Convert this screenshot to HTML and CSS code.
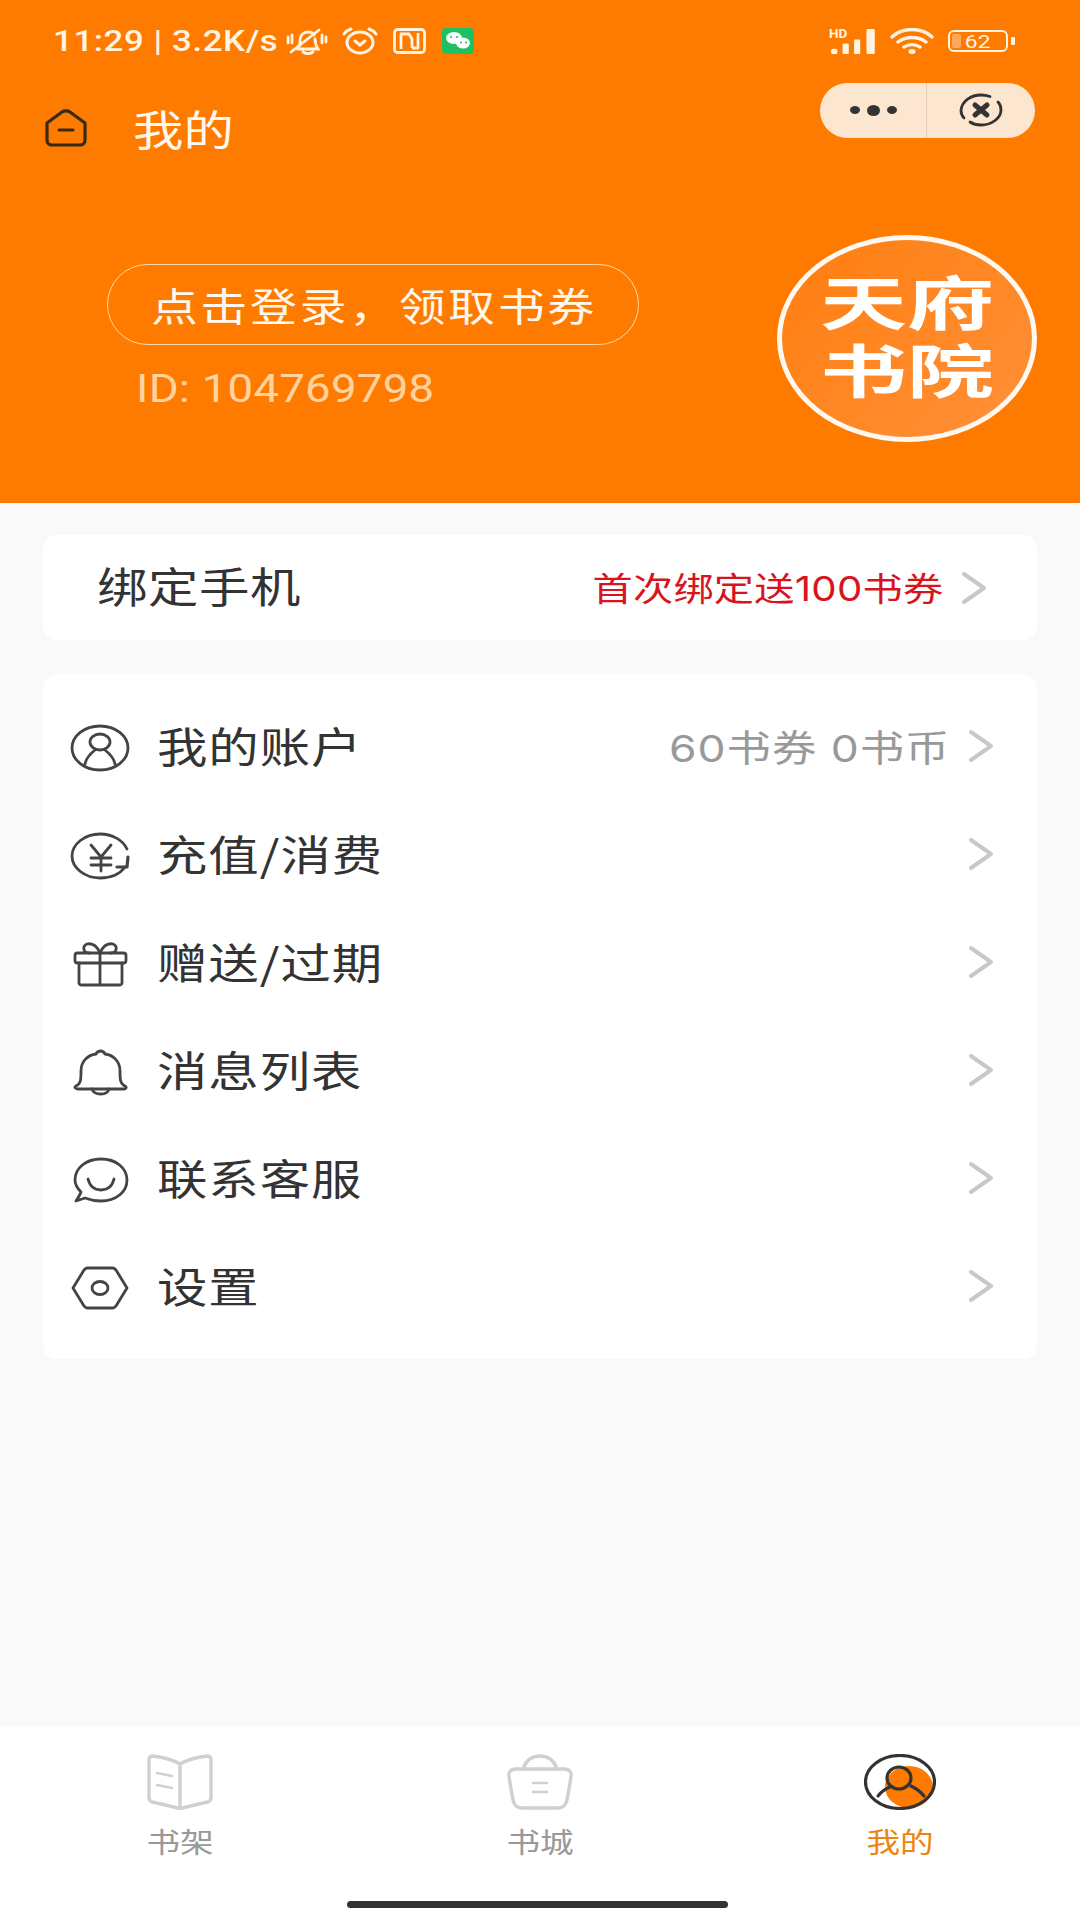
FILE: index.html
```html
<!DOCTYPE html>
<html lang="zh-CN">
<head>
<meta charset="utf-8">
<title>我的</title>
<link rel="stylesheet" href="styles.css">
</head>
<body>
<div class="page">
  <header class="header">
    <div class="status">
      <div class="status-left">
        <span class="time"><span class="sx">11:29 | 3.2K/s</span></span>
        <svg class="st-mute" viewBox="0 0 42 28" fill="none" stroke="#FFF3E2" stroke-width="2.800" stroke-linecap="round"><path d="M11 22c3-2 3-5 3-9 0-4 3-8 8-8 3 0 5 1 6 3M29 12c0 4 1 7 3 10H13M17 25c3 2 7 2 10 0M5 25 33 3M2 10v6M6 8v8M36 8v8M40 10v5"/></svg>
        <svg class="st-alarm" viewBox="0 0 38 28" fill="none" stroke="#FFF3E2" stroke-width="3" stroke-linecap="round"><ellipse cx="19" cy="15.500" rx="13" ry="10.500"/><path d="M3 7c2-3 4-4 7-5M35 7c-2-3-4-4-7-5M14 14l5 4 5-4"/></svg>
        <svg class="st-nfc" viewBox="0 0 33 26" fill="none" stroke="#FFF3E2" stroke-width="2.800" stroke-linejoin="round"><rect x="1.500" y="1.500" width="30" height="23" rx="3"/><path d="M8 21V6h8l3 5v9M25 5v15h-6"/></svg>
        <svg class="st-wechat" viewBox="0 0 32 26"><rect width="32" height="26" rx="4" fill="#1FC060"/><ellipse cx="12" cy="10" rx="8" ry="6" fill="#fff"/><ellipse cx="21" cy="15" rx="7" ry="5.500" fill="#fff"/><circle cx="9" cy="9" r="1.100" fill="#1FC060"/><circle cx="15" cy="9" r="1.100" fill="#1FC060"/><circle cx="19" cy="14.500" r="1" fill="#1FC060"/><circle cx="24" cy="14.500" r="1" fill="#1FC060"/></svg>
      </div>
      <div class="status-right">
        <svg class="st-signal" viewBox="0 0 46 26"><text x="-1" y="10" class="hd-text">HD</text><g fill="#FFF3E2"><rect x="1" y="20" width="6" height="5" rx="1.500"/><rect x="12" y="15" width="6" height="10" rx="1"/><rect x="23" y="11" width="6" height="14" rx="1"/><rect x="35" y="1" width="8" height="24" rx="1"/></g></svg>
        <svg class="st-wifi" viewBox="0 0 44 26" fill="none" stroke="#FFF3E2" stroke-width="3.400" stroke-linecap="round"><path d="M2 9C12-1 32-1 42 9M8 14c8-6 20-6 28 0M14 19c5-3 11-3 16 0"/><ellipse cx="22" cy="23.500" rx="3.500" ry="2.500" fill="#FFF3E2" stroke="none"/></svg>
        <div class="battery"><span class="battery-level"></span><span class="battery-num"><span class="sx-c">62</span></span></div>
        <span class="battery-nub"></span>
      </div>
    </div>
    <div class="nav">
      <svg class="nav-home" viewBox="0 0 42 38" fill="none" stroke="#3A2A14" stroke-width="3.200" stroke-linejoin="round" stroke-linecap="round"><path d="M2 14 17 3c2-1.500 6-1.500 8 0l15 11v17c0 3-2 5-5 5H7c-3 0-5-2-5-5z"/><path d="M14 21h14"/></svg>
      <span class="nav-title"><span class="sx">我的</span></span>
      <div class="capsule">
        <div class="capsule-dots"><span class="dot"></span><span class="dot dot-big"></span><span class="dot"></span></div>
        <div class="capsule-close">
          <svg class="close-icon" viewBox="0 0 44 34" fill="none" stroke="#333" stroke-linecap="round"><path d="M31 3.500C28 2.500 25 2 22 2 12 2 3 8 2 17c0 3 1 6 3 8M11 29c3 2 7 3 11 3 11 0 20-7 20-15 0-3-1-6-3-8" stroke-width="2.800"/><path d="M16 12 28 22M28 12 16 22" stroke-width="5"/></svg>
        </div>
      </div>
    </div>
    <div class="profile">
      <div class="profile-info">
        <div class="login"><span class="login-text"><span class="sx">点击登录，领取书券</span></span></div>
        <div class="uid"><span class="sx">ID: 104769798</span></div>
      </div>
      <div class="logo"><span class="logo-text">天府<br>书院</span></div>
    </div>
  </header>

  <main class="main">
    <section class="card card-bind">
      <span class="bind-title"><span class="sx">绑定手机</span></span>
      <span class="bind-note"><span class="sx-r">首次绑定送100书券</span></span>
      <svg class="chev chev-bind" viewBox="0 0 26 34" fill="none"><path d="M3 3 23 17 3 31"/></svg>
    </section>
    <section class="card card-list">
      <div class="row">
        <svg class="row-icon" viewBox="0 0 60 48"><ellipse cx="30" cy="24" rx="28" ry="22"/><ellipse cx="30" cy="18" rx="10" ry="8"/><path d="M15 40c1-6 5-10 10-14M45 40c-1-6-5-10-10-14"/></svg>
        <span class="row-label"><span class="sx">我的账户</span></span>
        <span class="row-meta"><span class="sx-r">60书券 0书币</span></span>
        <svg class="chev" viewBox="0 0 26 34" fill="none"><path d="M3 3 23 17 3 31"/></svg>
      </div>
      <div class="row">
        <svg class="row-icon" viewBox="0 0 60 48"><path d="M57 17C53 8 42 2 30 2 15 2 2 12 2 24s13 22 28 22c11 0 20-4 25-11"/><path d="M47 35h10l1-10" stroke-width="3.200"/><path d="M21 13l10 12 10-12M21 26h20M21 33h20M31 25v14"/></svg>
        <span class="row-label"><span class="sx">充值/消费</span></span>
        <svg class="chev" viewBox="0 0 26 34" fill="none"><path d="M3 3 23 17 3 31"/></svg>
      </div>
      <div class="row">
        <svg class="row-icon" viewBox="0 0 60 48"><rect x="5" y="13" width="51" height="10" rx="2.500"/><path d="M9 23v20c0 1 1 2 2 2h39c1 0 2-1 2-2V23M30 13v32M30 13c-3-7-8-10-13-9-5 2-4 9 2 9M30 13c3-7 8-10 13-9 5 2 4 9-2 9"/></svg>
        <span class="row-label"><span class="sx">赠送/过期</span></span>
        <svg class="chev" viewBox="0 0 26 34" fill="none"><path d="M3 3 23 17 3 31"/></svg>
      </div>
      <div class="row">
        <svg class="row-icon" viewBox="0 0 60 48"><path d="M6 38c5-2 5-7 5-15 0-10 7-16 15-17 2-4 7-4 9 0 8 1 15 7 15 17 0 8 0 13 5 15 2 1 1 3-1 3H8c-3 0-4-2-2-3z"/><path d="M22 41c1 4 5 5 9 5s7-1 8-5"/></svg>
        <span class="row-label"><span class="sx">消息列表</span></span>
        <svg class="chev" viewBox="0 0 26 34" fill="none"><path d="M3 3 23 17 3 31"/></svg>
      </div>
      <div class="row">
        <svg class="row-icon" viewBox="0 0 60 48"><path d="M11 36C7 32 5 28 5 24 5 12 16 3 31 3s26 9 26 21-11 21-26 21c-6 0-11-1-16-3L6 45c2-3 4-6 5-9z"/><path d="M18 23c2 8 7 11 13 11s11-3 13-11"/></svg>
        <span class="row-label"><span class="sx">联系客服</span></span>
        <svg class="chev" viewBox="0 0 26 34" fill="none"><path d="M3 3 23 17 3 31"/></svg>
      </div>
      <div class="row">
        <svg class="row-icon" viewBox="0 0 60 48"><path d="M3 24 14 6c1-1 2-2 3-2h26c1 0 2 1 3 2l11 18-11 18c-1 1-2 2-3 2H17c-1 0-2-1-3-2z"/><ellipse cx="30" cy="24" rx="8" ry="6.500"/></svg>
        <span class="row-label"><span class="sx">设置</span></span>
        <svg class="chev" viewBox="0 0 26 34" fill="none"><path d="M3 3 23 17 3 31"/></svg>
      </div>
    </section>
  </main>

  <footer class="footer">
    <nav class="tabs">
      <div class="tab">
        <svg class="tab-icon tab-gray" viewBox="0 0 66 56"><path d="M33 10C26 6 14 3 6 2 3 2 2 4 2 6v38c0 2 1 3 3 4 9 2 20 4 28 7 8-3 19-5 28-7 2-1 3-2 3-4V6c0-2-1-4-4-4-8 1-20 4-27 8zM33 10v45"/><path d="M10 19l15 3M10 31l15 3" stroke-width="2.400"/></svg>
        <span class="tab-label"><span class="sx-c">书架</span></span>
      </div>
      <div class="tab">
        <svg class="tab-icon tab-gray" viewBox="0 0 66 56"><path d="M16 15C19 6 25 2 33 2s14 4 17 13"/><path d="M9 15h48c5 0 8 3 7 8l-4 23c-1 5-4 8-9 8H15c-5 0-8-3-9-8L2 23c-1-5 2-8 7-8z"/><path d="M26 29h14M26 38h14" stroke-width="2.600"/></svg>
        <span class="tab-label"><span class="sx-c">书城</span></span>
      </div>
      <div class="tab tab-active">
        <svg class="tab-icon tab-me" viewBox="0 0 72 56"><ellipse class="me-blob" cx="45" cy="33" rx="24" ry="21"/><ellipse cx="36" cy="28" rx="34.500" ry="26.500"/><ellipse cx="35" cy="24" rx="12" ry="11"/><path d="M14 42c3-4 7-7 12-9M60 42c-3-4-7-7-13-10"/></svg>
        <span class="tab-label"><span class="sx-c">我的</span></span>
      </div>
    </nav>
    <div class="home-bar"></div>
  </footer>
</div>
</body>
</html>
```

FILE: styles.css
```css
* { box-sizing: border-box; }
html, body { margin: 0; padding: 0; }
body { font-family: "Noto Sans CJK SC", Roboto, sans-serif; }
.page { width: 1080px; height: 1920px; display: flex; flex-direction: column; background: #F9F9F9; overflow: hidden; }

.sx, .sx-r, .sx-c { display: inline-block; white-space: nowrap; transform: scaleX(1.2); }
.sx { transform-origin: left center; }
.sx-r { transform-origin: right center; }
.sx-c { transform-origin: center center; }

.header { height: 503px; background: #FF7B00; flex: none; }
.status { height: 82px; display: flex; justify-content: space-between; align-items: center; padding: 0 65px 0 53px; color: #FFF3E2; }
.status-left, .status-right { display: flex; align-items: center; }
.time { width: 233px; font-family: Roboto, sans-serif; font-weight: 500; font-size: 29px; letter-spacing: 0.5px; }
.st-mute { width: 42px; height: 28px; }
.st-alarm { width: 38px; height: 28px; margin-left: 13px; }
.st-nfc { width: 33px; height: 26px; margin-left: 14px; }
.st-wechat { width: 32px; height: 26px; margin-left: 16px; }
.st-signal { width: 48px; height: 27px; overflow: visible; }
.hd-text { font: 700 13px Roboto, sans-serif; fill: #FFF3E2; }
.st-wifi { width: 44px; height: 26px; margin-left: 12px; }
.battery { position: relative; width: 60px; height: 22px; margin-left: 14px; border: 2.500px solid #FFF3E2; border-radius: 6px; display: flex; align-items: center; justify-content: center; }
.battery-level { position: absolute; left: 2px; top: 2px; bottom: 2px; width: 9px; background: #FFA65A; border-radius: 2px; }
.battery-num { position: relative; font-family: Roboto, sans-serif; font-size: 19px; line-height: 1; color: #FFF3E2; }
.battery-nub { width: 4px; height: 8px; margin-left: 3px; background: #FFF3E2; border-radius: 1px; }

.nav { height: 56px; display: flex; align-items: center; padding: 0 45px; color: #FFF8EE; }
.nav-home { width: 42px; height: 38px; flex: none; margin-top: 36px; }
.nav-title { font-size: 42px; line-height: 56px; margin: 36px 0 0 46px; }
.capsule { margin-left: auto; width: 215px; height: 55px; display: flex; background: #FCE6D0; border-radius: 28px; }
.capsule-dots { width: 107px; display: flex; align-items: center; justify-content: center; gap: 7px; border-right: 1px solid #E3CDB8; }
.dot { width: 10px; height: 8px; background: #333; border-radius: 50%; }
.dot-big { width: 13px; height: 11px; }
.capsule-close { flex: 1; display: flex; align-items: center; justify-content: center; }
.close-icon { width: 44px; height: 34px; }

.profile { margin-top: 97px; height: 207px; display: flex; justify-content: space-between; padding: 0 43px 0 107px; }
.profile-info { padding-top: 29px; }
.login { width: 532px; height: 81px; border: 1.500px solid #FFD9A3; border-radius: 41px; display: flex; align-items: center; padding-left: 43px; color: #FFF8EE; }
.login-text { font-size: 39px; line-height: 1; letter-spacing: 2.300px; }
.uid { margin: 22px 0 0 29px; font-family: Roboto, sans-serif; font-size: 38px; letter-spacing: 0.200px; line-height: 44px; color: #FFD3A0; }
.logo { width: 260px; height: 207px; border: 5px solid #FFF8F0; border-radius: 50%; background: linear-gradient(135deg, #FF7E10, #FF9038); display: flex; align-items: center; justify-content: center; color: #FFF; }
.logo-text { display: block; margin-top: 0; font-family: "Liberation Sans", "Noto Sans CJK SC", sans-serif; font-weight: 700; font-size: 58px; line-height: 68px; text-align: center; white-space: nowrap; transform: scaleX(1.5); }

.main { flex: 1; padding: 32px 43px 0; display: flex; flex-direction: column; gap: 34px; }
.card { background: #FFF; border-radius: 14px; }
.card-bind { height: 105px; display: flex; align-items: center; padding: 0 50px 0 54px; }
.bind-title { font-size: 42px; letter-spacing: 0.500px; color: #333; margin: 0 auto 6px 0; }
.bind-note { font-family: Inter, "Noto Sans CJK SC", sans-serif; font-size: 33.500px; letter-spacing: 0.200px; color: #D81420; margin-bottom: 2px; }
.chev { width: 26px; height: 34px; flex: none; margin-left: 18px; }
.chev path { stroke: #C8C8C8; stroke-width: 4; stroke-linecap: round; stroke-linejoin: round; }
.card-list { height: 685px; padding: 18px 0 0; }
.row { height: 108px; display: flex; align-items: center; padding: 0 43px 0 27px; }
.row-icon { width: 60px; height: 48px; flex: none; margin-top: 3px; overflow: visible; fill: none; stroke: #444; stroke-width: 2.800; stroke-linecap: round; stroke-linejoin: round; }
.row-label { margin: 0 auto 3px 27px; font-size: 42px; letter-spacing: 0.800px; color: #333; }
.row-meta { font-family: Inter, "Noto Sans CJK SC", sans-serif; font-size: 37px; letter-spacing: 0.800px; color: #999; }

.footer { height: 194px; flex: none; background: #FFF; display: flex; flex-direction: column; }
.tabs { display: flex; padding-top: 28px; }
.tab { flex: 1; display: flex; flex-direction: column; align-items: center; }
.tab-icon { width: 66px; height: 56px; fill: none; stroke-linecap: round; stroke-linejoin: round; }
.tab-gray { stroke: #D0D0D0; stroke-width: 3.400; }
.tab-me { width: 72px; stroke: #333; stroke-width: 3.200; }
.me-blob { fill: #FF7B00; stroke: none; }
.tab-label { margin-top: 9px; font-size: 28px; line-height: 44px; color: #999; }
.tab-active .tab-label { color: #EE8512; }
.home-bar { width: 381px; height: 7px; margin: 38px 0 0 347px; background: #333; border-radius: 4px; }
```
